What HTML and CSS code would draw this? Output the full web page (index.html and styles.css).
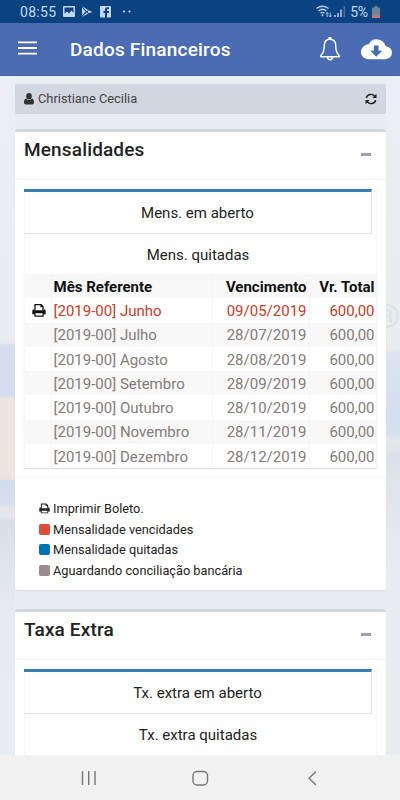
FILE: index.html
```html
<!DOCTYPE html>
<html lang="pt-BR">
<head>
<meta charset="utf-8">
<title>Dados Financeiros</title>
<link rel="stylesheet" href="styles.css">
</head>
<body>
<svg width="0" height="0" class="defs">
  <symbol id="print" viewBox="0 0 14 13">
    <path d="M3 6V.7h6.200L11 2.500V6M9 .7v2h2" fill="none" stroke="currentColor" stroke-width="1.300"/>
    <path d="M2 5.300h.5v1h9v-1h.5a1.700 1.700 0 0 1 1.700 1.700v3.200H11.700v2.500H2.300v-2.500H.3V7A1.700 1.700 0 0 1 2 5.300zM3.500 9.300v2.200h7V9.300z" fill="currentColor" fill-rule="evenodd"/>
  </symbol>
</svg>
<div class="status">
  <span class="clock">08:55</span>
  <svg class="notif" width="70" height="12" viewBox="0 0 70 12" fill="#c3d8f0">
    <path fill-rule="evenodd" d="M1 0h10a1 1 0 0 1 1 1v9a1 1 0 0 1-1 1H1a1 1 0 0 1-1-1V1a1 1 0 0 1 1-1zM1.500 1.500v6l2.500-2 2 2 2.500-3 2 2.500V1.500z"/>
    <path d="M19 0l6 4-1.500 1.300zM19 1.500L22.500 5.500 19 9.500zM25.500 4.300L29.500 6 25.500 7.200 24.500 5.700zM19 11l4.500-4.500L25 7.800z"/>
    <path fill-rule="evenodd" d="M38 0h9a1 1 0 0 1 1 1v9.500a1 1 0 0 1-1 1h-9a1 1 0 0 1-1-1V1a1 1 0 0 1 1-1zM42 11.500h2V7h2V5h-2V3.800q0-.8.8-.8H46V1.300h-1.800Q42 1.300 42 3.500V5h-1.500v2H42z"/>
    <circle cx="61" cy="5.500" r="1.100"/><circle cx="66.500" cy="5.500" r="1.100"/>
  </svg>
  <svg class="signal" width="30" height="13" viewBox="0 0 30 13" fill="none" stroke="#b9cfe8">
    <path d="M.5 3.500Q6.500-1 12.500 3.500M2.500 6Q6.500 2.500 10.500 6M4.500 8.300Q6.500 6.500 8.500 8.300" stroke-width="1.300"/>
    <path d="M6.500 9l1.200 1.200-1.200 1.300-1.200-1.300z" fill="#b9cfe8" stroke="none"/>
    <path d="M11.200 12V7.500M9.800 9l1.400-1.500L12.600 9M14.200 7.500V12M12.800 10.500l1.400 1.500 1.400-1.500" stroke-width=".9"/>
    <path d="M19 12v-2M22 12V8M25 12V4.500" stroke-width="1.500"/>
    <path d="M28.300 12V1" stroke-width="1.500" opacity=".35"/>
  </svg>
  <span class="percent">5%</span>
  <svg class="battery" width="8" height="12" viewBox="0 0 8 12"><path d="M2.500 0h3v1.500H8V12H0V1.500h2.500z" fill="#6f8495"/><path d="M0 9.500h8V12H0z" fill="#cf7868"/></svg>
</div>
<header class="bar">
  <svg class="menu" width="19" height="14" viewBox="0 0 19 14" stroke="#fff" stroke-width="1.900"><path d="M0 1.400h19M0 7h19M0 12.600h19"/></svg>
  <h1>Dados Financeiros</h1>
  <svg class="bell" width="20" height="24" viewBox="0 0 20 24" fill="none" stroke="#fff" stroke-width="1.400" stroke-linejoin="round"><path d="M10 2.200C6 2.200 4.300 5 4.300 8.500c0 5.500-.8 7.500-3.500 10.300v.9h18.400v-.9C16.500 16 15.700 14 15.700 8.500c0-3.500-1.700-6.300-5.700-6.300z"/><path d="M8.800 1.700a1.200 1.200 0 0 1 2.400 0" fill="#fff"/><path d="M7.700 20.200a2.300 2.500 0 0 0 4.600 0" /></svg>
  <svg class="cloud" width="31" height="22" viewBox="0 0 32 22"><path d="M25.300 8.200A9.300 9.300 0 0 0 8 6C3.500 6.500 0 9.700 0 14.200 0 18.600 3.600 21.500 8 21.500h17c4 0 7-3 7-6.800 0-3.600-3-6.300-6.700-6.500z" fill="#fff"/><path d="M13.300 7.500h4.800v5.200H22l-6.300 6.200-6.200-6.200h3.800z" fill="#4b6cb2"/></svg>
</header>
<main>
  <span class="mark">®</span>
  <div class="user">
    <svg width="10" height="12" viewBox="0 0 10 12" fill="#333"><ellipse cx="5" cy="3.200" rx="2.800" ry="3.200"/><path d="M2 5.500Q0 6 0 9.500 0 11.500 1.800 11.500h6.400Q10 11.500 10 9.500 10 6 8 5.500 5 8.500 2 5.500z"/></svg>
    <span>Christiane Cecilia</span>
    <svg class="sync" width="12" height="12" viewBox="0 0 12 12"><path d="M1.300 5A4.700 4.500 0 0 1 9.700 3.200M10.700 7A4.700 4.500 0 0 1 2.300 8.800" fill="none" stroke="#222" stroke-width="1.400"/><path d="M11.500.8V5H7.300zM.5 11.200V7h4.200z" fill="#222"/></svg>
  </div>
  <section class="card first">
    <div class="head"><h2>Mensalidades</h2><i class="minus"></i></div>
    <div class="panel">
      <div class="tab active">Mens. em aberto</div>
      <div class="tab">Mens. quitadas</div>
      <table>
        <colgroup><col class="c1"><col class="c2"><col class="c3"><col class="c4"></colgroup>
        <tr><th></th><th>Mês Referente</th><th>Vencimento</th><th>Vr. Total</th></tr>
        <tr class="late"><td><svg width="14" height="13"><use href="#print"/></svg></td><td>[2019-00] Junho</td><td>09/05/2019</td><td>600,00</td></tr>
        <tr><td></td><td>[2019-00] Julho</td><td>28/07/2019</td><td>600,00</td></tr>
        <tr><td></td><td>[2019-00] Agosto</td><td>28/08/2019</td><td>600,00</td></tr>
        <tr><td></td><td>[2019-00] Setembro</td><td>28/09/2019</td><td>600,00</td></tr>
        <tr><td></td><td>[2019-00] Outubro</td><td>28/10/2019</td><td>600,00</td></tr>
        <tr><td></td><td>[2019-00] Novembro</td><td>28/11/2019</td><td>600,00</td></tr>
        <tr><td></td><td>[2019-00] Dezembro</td><td>28/12/2019</td><td>600,00</td></tr>
      </table>
    </div>
    <ul class="legend">
      <li><svg width="11" height="11"><use href="#print"/></svg><span>Imprimir Boleto.</span></li>
      <li><i class="red"></i><span>Mensalidade vencidades</span></li>
      <li><i class="blue"></i><span>Mensalidade quitadas</span></li>
      <li><i class="gray"></i><span>Aguardando conciliação bancária</span></li>
    </ul>
  </section>
  <section class="card">
    <div class="head"><h2>Taxa Extra</h2><i class="minus"></i></div>
    <div class="panel">
      <div class="tab active">Tx. extra em aberto</div>
      <div class="tab">Tx. extra quitadas</div>
    </div>
  </section>
</main>
<nav>
  <svg width="400" height="45" viewBox="0 0 400 45" fill="none" stroke="#777" stroke-width="1.400"><path d="M82.500 16v14M88.700 16v14M95 16v14M316 16.500l-7 6.700 7 6.700"/><rect x="193" y="16.500" width="14.500" height="13.500" rx="4"/></svg>
</nav>
</body>
</html>
```
FILE: styles.css
```css
* { box-sizing: border-box; }
html, body { height: 100%; }
body { margin: 0; width: 400px; height: 800px; overflow: hidden; display: flex; flex-direction: column; font-family: Roboto, sans-serif; color: #222; }
svg { display: block; flex: none; }
.defs { position: absolute; }
h1, h2, ul { margin: 0; padding: 0; }
.status { height: 23px; flex: none; background: #0b4382; display: flex; align-items: center; padding: 0 20px; color: #c3d8f0; font-size: 14px; }
.clock { width: 44px; letter-spacing: .3px; }
.signal { margin-left: 183px; }
.percent { margin-left: 4px; width: 22px; letter-spacing: -.4px; }
.bar { height: 53px; flex: none; background: #4b6cb2; border-bottom: 1px solid #4566aa; display: flex; align-items: center; padding: 0 8px 0 18px; }
.menu { margin-top: -3px; }
h1 { font-size: 19px; font-weight: 500; color: #fff; margin-left: 33px; width: 250px; letter-spacing: .2px; }
.cloud { margin-left: 21px; }
main {
  position: relative; flex: 1; min-height: 0; overflow: hidden; padding: 8px 14px 0 15px;
  background:
    linear-gradient(#ebeef3, #e8ecf2 267px, #d5deed 269px, #d3ddef 320px, #ebe5e1 322px, #ebe5df 403px, #d1dcee 405px, #d6dfee 428px, #e2e6ea 431px, #e2e6ea 441px, #d9dee6 446px, #e0e4eb 490px, #e7eaf0 540px, #e9edf2) left / 15px 100% no-repeat,
    linear-gradient(#ebeef3, #e8ecf0 274px, #dde4ef 277px, #d4deee 340px, #d7dfec 357px, #e4e7eb 364px, #e2e5e9 372px, #dce0e8 378px, #e3e7ed 440px, #e9ecf2 500px, #e9edf2) right / 14px 100% no-repeat,
    #e9edf2;
}
.mark { position: absolute; right: 0; top: 217px; font-size: 33px; line-height: 48px; color: #d7e4e3; }
.user { height: 30px; background: #d2d6df; border-radius: 2px; display: flex; align-items: center; padding: 0 9px 0 9px; font-size: 12.850px; color: #444; position: relative; }
.user span { margin-left: 4px; margin-top: -1px; }
.sync { margin-left: auto; }
.card { position: relative; background: #fff; border-top: 3px solid #d2d6de; border-radius: 3px; box-shadow: 0 1px 1px #0001; margin-top: 19px; height: 461px; }
.card.first { margin-top: 15px; }
.head { height: 48px; border-bottom: 1px solid #f0f3f6; display: flex; justify-content: space-between; padding: 7px 15px 0 9px; }
h2 { font-size: 19px; line-height: 22px; font-weight: 500; letter-spacing: .15px; }
.minus { width: 10px; height: 3px; background: #9da2b0; margin-top: 14px; }
.panel { width: 353px; margin: 9px 0 0 9px; border: solid #f6f6f6; border-width: 0 1px; }
.tab { font-size: 15px; height: 42px; line-height: 43px; width: 348px; text-align: center; margin-left: -1px; white-space: nowrap; }
.tab.active { height: 45px; line-height: 42px; border-top: 3px solid #397fa7; border-right: 1px solid #ddd; border-bottom: 1px solid #ddd; }
table { width: 352px; margin: -2px 0 0 -1px; border-collapse: collapse; table-layout: fixed; font-size: 15px; box-shadow: 0 1px 1px #0002; }
.c1 { width: 27px; }
.c2 { width: 161px; }
.c3 { width: 97px; }
.c4 { width: 67px; }
tr { height: 24.300px; color: #847b7b; }
tr:nth-child(odd) { background: #f8f8f8; }
tr.late { color: #c23c2c; }
td, th { padding: 1px 2px 0; text-align: right; border-right: 1px solid #f5f5f5; white-space: nowrap; line-height: 22px; }
th { color: #111; font-weight: 700; }
td:nth-child(2), th:nth-child(2) { text-align: left; }
td svg { color: #111; margin-left: 6px; }
td:last-child, th:last-child { padding-right: 1px; }
.legend { list-style: none; margin-top: 9px; border-top: 1px solid #f4f4f4; padding: 20px 0 0 24px; font-size: 12.750px; }
.legend li { display: flex; align-items: center; height: 20.600px; }
.legend i { width: 11px; height: 11px; border-radius: 2px; }
.legend span { margin-left: 3px; }
.red { background: #dd4b39; }
.blue { background: #0073b7; }
.gray { background: #998b8e; }
nav { height: 45px; flex: none; background: #f1f1f1; }
```
